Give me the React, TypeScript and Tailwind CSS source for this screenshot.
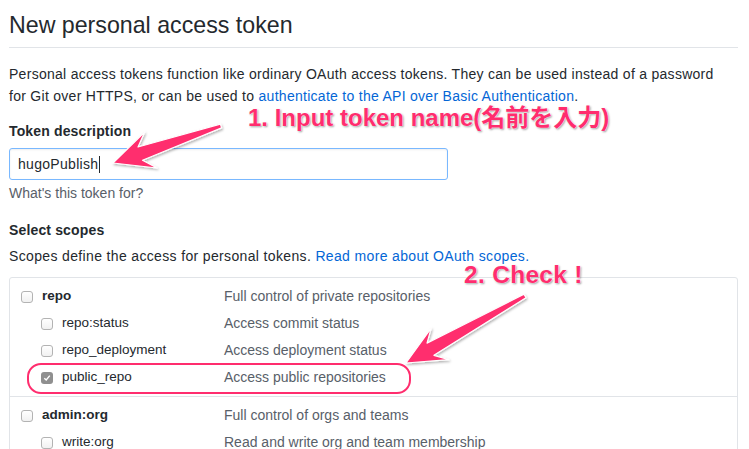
import React from "react";

type Pt = [number, number];

// skitch-style arrow: narrow tail, widening shaft, swept-back head
function arrowPoints(tail: Pt, tip: Pt, headLen: number, headHalf: number, tailHalf: number, neckHalf: number) {
  const dx = tip[0] - tail[0];
  const dy = tip[1] - tail[1];
  const len = Math.hypot(dx, dy);
  const ux = dx / len;
  const uy = dy / len;
  const nx = -uy;
  const ny = ux;
  const at = (d: number, off: number): string =>
    `${(tip[0] - ux * d + nx * off).toFixed(1)},${(tip[1] - uy * d + ny * off).toFixed(1)}`;
  const pts = [
    `${(tail[0] + nx * tailHalf).toFixed(1)},${(tail[1] + ny * tailHalf).toFixed(1)}`,
    at(headLen * 0.72, neckHalf),
    at(headLen, headHalf),
    `${tip[0]},${tip[1]}`,
    at(headLen, -headHalf),
    at(headLen * 0.72, -neckHalf),
    `${(tail[0] - nx * tailHalf).toFixed(1)},${(tail[1] - ny * tailHalf).toFixed(1)}`,
  ];
  return pts.join(" ");
}

function Checkbox({ checked = false }: { checked?: boolean }) {
  if (checked) {
    return (
      <span className="flex h-[12px] w-[12px] items-center justify-center rounded-[3px] bg-[#8f8f8f]">
        <svg width="8" height="8" viewBox="0 0 8 8">
          <path d="M1.3 4.2 L3.2 6 L6.8 1.6" fill="none" stroke="#fff" strokeWidth="1.4" />
        </svg>
      </span>
    );
  }
  return (
    <span className="block h-[12px] w-[12px] rounded-[3px] border border-[#b3b3b3] bg-gradient-to-b from-white to-[#f1f1f1]" />
  );
}

type Scope = { name: string; desc: string; sub?: boolean; checked?: boolean };

const groups: Scope[][] = [
  [
    { name: "repo", desc: "Full control of private repositories" },
    { name: "repo:status", desc: "Access commit status", sub: true },
    { name: "repo_deployment", desc: "Access deployment status", sub: true },
    { name: "public_repo", desc: "Access public repositories", sub: true, checked: true },
  ],
  [
    { name: "admin:org", desc: "Full control of orgs and teams" },
    { name: "write:org", desc: "Read and write org and team membership", sub: true },
  ],
];

function ScopeRow({ s }: { s: Scope }) {
  return (
    <div className="flex h-[27px] items-center">
      <div className={`flex w-[214px] items-center text-[13.5px] ${s.sub ? "pl-[31px]" : "pl-[11px]"}`}>
        <Checkbox checked={s.checked} />
        <span className={`ml-[9px] ${s.sub ? "text-[#24292e]" : "font-bold text-[#24292e]"}`}>{s.name}</span>
      </div>
      <span className="text-[14px] text-[#586069]">{s.desc}</span>
    </div>
  );
}

export default function App() {
  const pink = "#ff2d6e";
  return (
    <div className="relative h-[449px] w-[749px] overflow-hidden bg-white font-['Liberation_Sans',Arial,sans-serif] text-[#24292e]">
      <div className="pl-[9px] pr-[11px]">
        <h1 className="border-b border-[#e1e4e8] pt-[10px] pb-[7px] text-[23.2px] leading-[30px] font-normal">
          New personal access token
        </h1>
        <p className="mt-[15px] text-[14px] leading-[22px] tracking-[0.28px]">
          Personal access tokens function like ordinary OAuth access tokens. They can be used instead of a password
          <br />
          for Git over HTTPS, or can be used to{" "}
          <a className="text-[#0366d6]">authenticate to the API over Basic Authentication</a>.
        </p>

        <div className="mt-[13px] text-[14px] leading-[22px] font-bold tracking-[0.15px]">Token description</div>
        <div className="mt-[6px] flex h-[32px] w-[439px] items-center rounded-[3px] border border-[#79b8ff] px-[8px] text-[14px] tracking-[0.3px] shadow-[inset_0_1px_2px_rgba(27,31,35,0.075)]">
          <span>hugoPublish</span>
          <span className="ml-[1px] h-[17px] w-[1px] bg-[#24292e]" />
        </div>
        <div className="mt-[4px] text-[14px] leading-[18px] text-[#586069]">What's this token for?</div>

        <div className="mt-[17px] text-[14px] leading-[22px] font-bold tracking-[0.15px]">Select scopes</div>
        <div className="mt-[4px] text-[14px] leading-[22px] tracking-[0.35px]">
          Scopes define the access for personal tokens. <a className="text-[#0366d6]">Read more about OAuth scopes.</a>
        </div>

        <div className="mt-[10px] rounded-[3px] border border-[#e1e4e8]">
          {groups.map((g, i) => (
            <div key={i} className={`py-[5px] ${i > 0 ? "border-t border-[#e1e4e8]" : ""}`}>
              {g.map((s) => (
                <ScopeRow key={s.name} s={s} />
              ))}
            </div>
          ))}
        </div>
      </div>

      {/* annotations drawn over the page */}
      <div className="pointer-events-none absolute top-[363px] left-[27px] h-[31px] w-[384px] rounded-[14px] border-[2.5px] border-[#ff2d6e]" />

      <svg className="pointer-events-none absolute inset-0" width="749" height="449">
        <defs>
          <filter id="sh" x="-20%" y="-20%" width="140%" height="140%">
            <feDropShadow dx="1" dy="1.5" stdDeviation="1.2" floodColor="#000" floodOpacity="0.3" />
          </filter>
        </defs>
        <polygon
          points={arrowPoints([221, 126], [113, 163], 40, 19, 2, 7)}
          fill={pink}
          stroke="#fff"
          strokeWidth="1.2"
          strokeLinejoin="round"
          filter="url(#sh)"
        />
        <polygon
          points={arrowPoints([525, 296], [406, 363], 39, 18, 2, 7)}
          fill={pink}
          stroke="#fff"
          strokeWidth="1.2"
          strokeLinejoin="round"
          filter="url(#sh)"
        />
      </svg>

      <div className="pointer-events-none absolute top-[104px] left-[248px] font-['Liberation_Sans','Noto_Sans_CJK_JP',sans-serif] text-[24px] leading-[28px] font-bold text-[#ff2d6e] [text-shadow:0_0_1px_#fff,0_0_2px_#fff,1px_1px_2px_rgba(0,0,0,0.45)]">
        1. Input token name(名前を入力)
      </div>
      <div className="pointer-events-none absolute top-[261px] left-[464px] text-[24.5px] leading-[28px] font-bold tracking-[0.3px] text-[#ff2d6e] [text-shadow:0_0_1px_#fff,0_0_2px_#fff,1px_1px_2px_rgba(0,0,0,0.45)]">
        2. Check !
      </div>
    </div>
  );
}
